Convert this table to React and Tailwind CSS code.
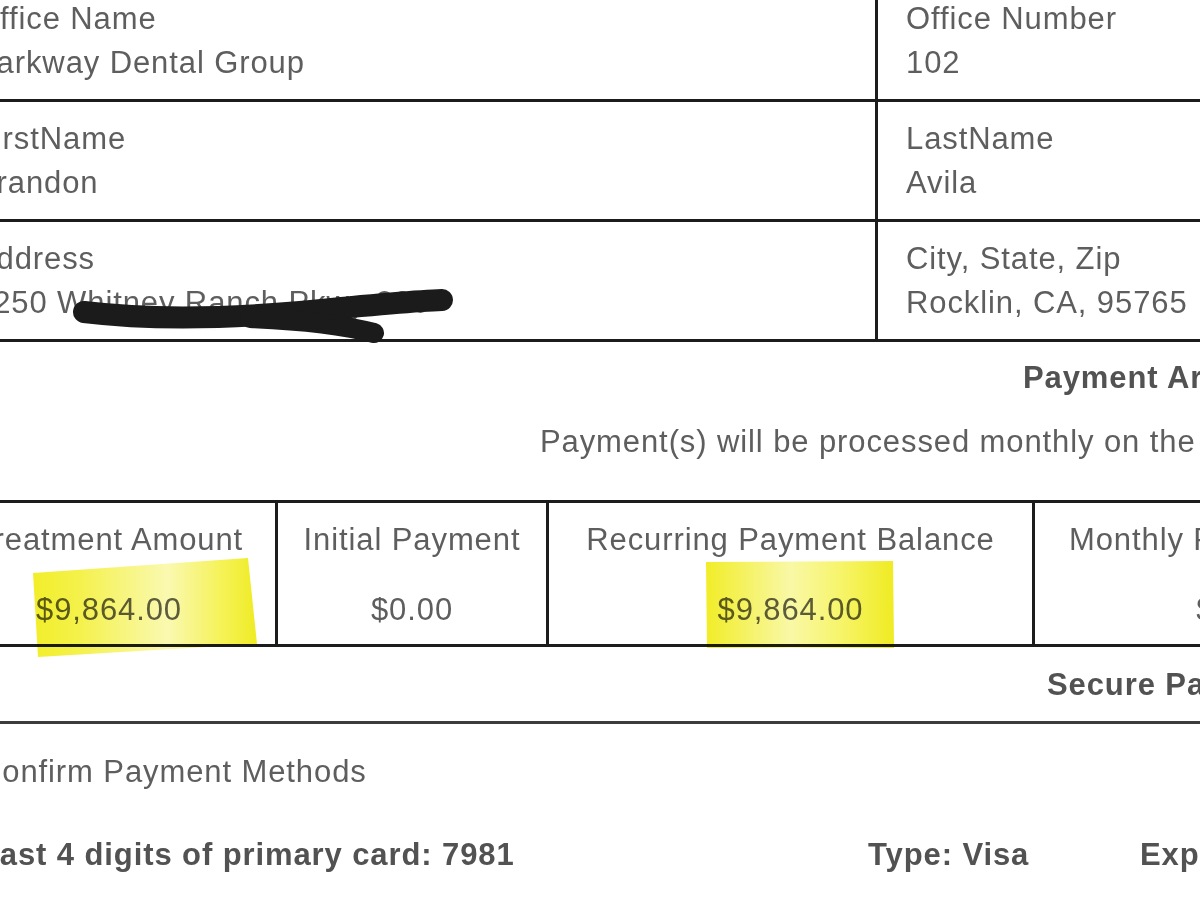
import React from "react";

function Row({ leftLabel, leftValue, rightLabel, rightValue }) {
  return (
    <div className="flex h-[120px] border-b-[3px] border-[#1c1c1c]">
      <div className="w-[935px] shrink-0 border-r-[3px] border-[#1c1c1c] pl-[32px] pt-[15px] whitespace-nowrap">
        <div>{leftLabel}</div>
        <div>{leftValue}</div>
      </div>
      <div className="flex-1 pl-[28px] pt-[15px] whitespace-nowrap">
        <div>{rightLabel}</div>
        <div>{rightValue}</div>
      </div>
    </div>
  );
}

function Cell({ w, label, value, border = true }) {
  return (
    <div
      className={`${w} shrink-0 text-center whitespace-nowrap pt-[15px] pb-[12px] ${
        border ? "border-r-[3px] border-[#1c1c1c]" : ""
      }`}
    >
      <div>{label}</div>
      <div className="mt-[26px]">{value}</div>
    </div>
  );
}

export default function App() {
  return (
    <div className="relative w-[1200px] h-[900px] overflow-hidden bg-white font-['Liberation_Sans',Arial,sans-serif] text-[31px] leading-[44px] tracking-[0.9px] text-[#5e5e5e]">
      <div className="-ml-[57px] -mt-[18px] w-[1700px]">
        <div className="w-[1700px]">
          <Row
            leftLabel="Office Name"
            leftValue="Parkway Dental Group"
            rightLabel="Office Number"
            rightValue="102"
          />
          <Row
            leftLabel="FirstName"
            leftValue="Brandon"
            rightLabel="LastName"
            rightValue="Avila"
          />
          <Row
            leftLabel="Address"
            leftValue="2250 Whitney Ranch Pkwy 200"
            rightLabel="City, State, Zip"
            rightValue="Rocklin, CA, 95765"
          />
        </div>

        <div className="mt-[14px] pl-[1080px] font-bold text-[#525252] whitespace-nowrap">
          Payment Arrangement
        </div>
        <div className="mt-[20px] pl-[597px] whitespace-nowrap">
          Payment(s) will be processed monthly on the 15th
        </div>

        <div className="mt-[36px] flex border-y-[3px] border-[#1c1c1c]">
          <Cell w="w-[335px]" label="Treatment Amount" value="$9,864.00" />
          <Cell w="w-[271px]" label="Initial Payment" value="$0.00" />
          <Cell w="w-[486px]" label="Recurring Payment Balance" value="$9,864.00" />
          <Cell w="w-[444px]" label="Monthly Payment Amount" value="$822.00" />
        </div>

        <div className="mt-[16px] pl-[1104px] font-bold text-[#525252] whitespace-nowrap">
          Secure Payment Information
        </div>
        <div className="mt-[14px] border-t-[3px] border-[#3c3c3c]" />

        <div className="mt-[26px] pl-[36px] whitespace-nowrap">Confirm Payment Methods</div>

        <div className="mt-[39px] flex pl-[37px] font-bold text-[#525252] whitespace-nowrap">
          <span className="w-[888px] shrink-0">Last 4 digits of primary card: 7981</span>
          <span className="w-[272px] shrink-0">Type: Visa</span>
          <span>Exp: 08/27</span>
        </div>
      </div>

      {/* highlighter marks */}
      <svg
        className="pointer-events-none absolute inset-0 mix-blend-multiply"
        width="1200"
        height="900"
        viewBox="0 0 1200 900"
      >
        <defs>
          <linearGradient id="hl1" x1="0" y1="0" x2="1" y2="0">
            <stop offset="0" stopColor="#f2ee2a" />
            <stop offset="0.2" stopColor="#f4f14a" />
            <stop offset="0.6" stopColor="#faf9b0" />
            <stop offset="0.85" stopColor="#f5f255" />
            <stop offset="1" stopColor="#efeb24" />
          </linearGradient>
          <linearGradient id="hl2" x1="0" y1="0" x2="1" y2="0">
            <stop offset="0" stopColor="#f1ed28" />
            <stop offset="0.45" stopColor="#f9f8a6" />
            <stop offset="0.7" stopColor="#f7f56e" />
            <stop offset="1" stopColor="#efeb22" />
          </linearGradient>
        </defs>
        <polygon points="33,573 248,558 257,644 38,657" fill="url(#hl1)" />
        <polygon points="706,562 893,561 894,648 707,648" fill="url(#hl2)" />
      </svg>

      {/* marker scribble over address */}
      <svg
        className="pointer-events-none absolute inset-0"
        width="1200"
        height="900"
        viewBox="0 0 1200 900"
      >
        <g fill="none" stroke="#1b1b1b" strokeLinecap="round" strokeLinejoin="round">
          <path d="M84 312 C 150 320 230 318 300 312 C 360 306 410 301 442 300" strokeWidth="22" />
          <path d="M250 318 C 300 320 340 324 374 333" strokeWidth="20" />
        </g>
      </svg>
    </div>
  );
}
